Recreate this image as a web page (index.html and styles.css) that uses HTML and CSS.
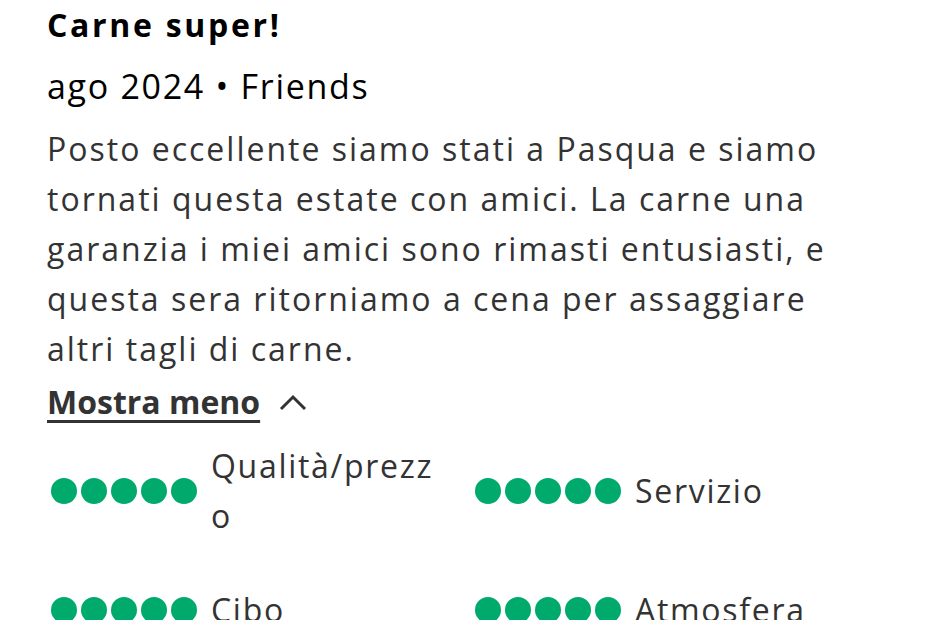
FILE: index.html
```html
<!DOCTYPE html>
<html lang="it">
<head>
<meta charset="utf-8">
<link rel="stylesheet" href="styles.css">
</head>
<body>
<article class="review">
  <h2 class="title">Carne super!</h2>
  <div class="meta">ago 2024 • Friends</div>
  <p class="text">Posto eccellente siamo stati a Pasqua e siamo<br>tornati questa estate con amici. La carne una<br>garanzia i miei amici sono rimasti entusiasti, e<br>questa sera ritorniamo a cena per assaggiare<br>altri tagli di carne.</p>
  <div class="toggle"><span class="toggle-label">Mostra meno</span>
    <svg class="caret" width="30" height="20" viewBox="0 0 30 20"><path d="M3 16 L15 4 L27 16" fill="none" stroke="#333" stroke-width="3"/></svg>
  </div>
  <div class="ratings">
    <div class="rating">
      <div class="bubbles"><span></span><span></span><span></span><span></span><span></span></div>
      <div class="label">Qualità/prezzo</div>
    </div>
    <div class="rating">
      <div class="bubbles"><span></span><span></span><span></span><span></span><span></span></div>
      <div class="label">Servizio</div>
    </div>
    <div class="rating">
      <div class="bubbles"><span></span><span></span><span></span><span></span><span></span></div>
      <div class="label">Cibo</div>
    </div>
    <div class="rating">
      <div class="bubbles"><span></span><span></span><span></span><span></span><span></span></div>
      <div class="label">Atmosfera</div>
    </div>
  </div>
</article>
</body>
</html>
```
FILE: styles.css
```css
html, body { margin: 0; padding: 0; background: #fff; }
body { font-family: "Open Sans", "Noto Sans", sans-serif; color: #333; overflow: hidden; }
.review { padding: 0 0 0 47px; width: 860px; }
.title { margin: 0; font-size: 32px; line-height: 50px; font-weight: 700; letter-spacing: 2.7px; color: #000; }
.meta { margin-top: 6px; font-size: 34px; line-height: 60px; letter-spacing: 1.7px; color: #000; }
.text { margin: 8px 0 0; font-size: 32px; line-height: 50px; letter-spacing: 2px; white-space: nowrap; }
.toggle { display: flex; align-items: center; gap: 18px; height: 50px; margin-top: 3px; }
.toggle-label { font-size: 32px; line-height: 50px; font-weight: 700; text-decoration: underline; text-underline-offset: 6px; text-decoration-thickness: 3px; }
.caret { margin-top: 2px; }
.ratings { display: grid; grid-template-columns: 424px 340px; row-gap: 44px; margin-top: 14px; }
.rating { display: flex; align-items: center; gap: 14px; }
.bubbles { display: flex; gap: 4px; padding-left: 4px; }
.bubbles span { width: 26px; height: 26px; border-radius: 50%; background: #00aa6c; }
.label { font-size: 32px; line-height: 50px; letter-spacing: 1.7px; width: 232px; word-break: break-all; }
```
